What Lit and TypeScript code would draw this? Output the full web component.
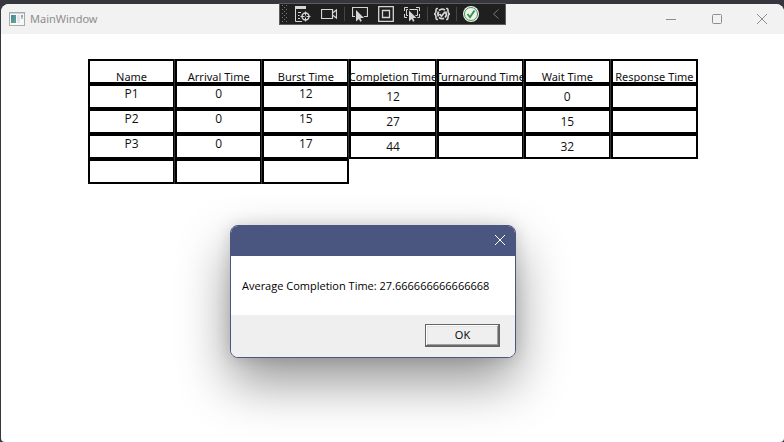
import { LitElement, html, css, svg, nothing } from "lit";
import { customElement, property } from "lit/decorators.js";
import { classMap } from "lit/directives/class-map.js";

type Row = (string | null)[];

const HEADERS = [
  "Name",
  "Arrival Time",
  "Burst Time",
  "Completion Time",
  "Turnaround Time",
  "Wait Time",
  "Response Time",
];

// The first three columns are inputs, the others are computed.
const INPUT_COLUMNS = 3;

const ROWS: Row[] = [
  ["P1", "0", "12", "12", "", "0", ""],
  ["P2", "0", "15", "27", "", "15", ""],
  ["P3", "0", "17", "44", "", "32", ""],
  ["", "", ""],
];

@customElement("debug-toolbar")
class DebugToolbar extends LitElement {
  static styles = css`
    :host {
      display: flex;
      align-items: center;
      box-sizing: border-box;
      height: 22px;
      border: 1px solid #5c5c5c;
      background: #1f1f1f;
    }
    .grip {
      width: 10px;
      height: 20px;
    }
    button {
      display: flex;
      align-items: center;
      justify-content: center;
      width: 26px;
      height: 20px;
      padding: 0;
      border: 0;
      background: none;
    }
    .narrow {
      width: 24px;
    }
    .last {
      width: 22px;
    }
    .sep {
      width: 1px;
      height: 14px;
      margin: 0 2px;
      background: #454545;
    }
    svg {
      display: block;
      fill: none;
      stroke: #d6d6d6;
    }
    .solid {
      fill: #d6d6d6;
      stroke: none;
    }
    .cursor {
      fill: #d6d6d6;
      stroke: #1f1f1f;
      paint-order: stroke;
      stroke-width: 2;
    }
  `;

  private icon(body: unknown) {
    return html`<svg width="16" height="16" viewBox="0 0 16 16" aria-hidden="true">${body}</svg>`;
  }

  render() {
    const dots = [];
    for (let row = 0; row < 9; row++) {
      for (const x of row % 2 ? [4] : [2, 6]) {
        dots.push(svg`<rect x=${x} y=${1 + row * 2} width="1" height="1"/>`);
      }
    }
    return html`
      <svg class="grip" viewBox="0 0 10 20" aria-hidden="true">
        <g fill="#7a7a7a" stroke="none">${dots}</g>
      </svg>
      <button aria-label="Go to live visual tree">
        ${this.icon(svg`
          <path class="solid" d="M0 0h11v3H0z"/>
          <path d="M.5 3v12.500H7M3 6.500h3M3 9.500h1.500M3 12.500h2"/>
          <circle cx="10.500" cy="10.500" r="3.500" stroke-width="1.400"/>
          <path d="M10.500 5.500v4M10.500 11.500v4M5.500 10.500h4M11.500 10.500h4"/>`)}
      </button>
      <button aria-label="Show in XAML live preview">
        ${this.icon(svg`
          <path d="M.5 3.500h11v9H.5z" stroke-width="1.200"/>
          <path d="M11.500 7l4-3v8l-4-3" stroke-width="1.200"/>`)}
      </button>
      <span class="sep"></span>
      <button aria-label="Select element">
        ${this.icon(svg`
          <path d="M3 10.500H.5v-9h15v9H11" stroke-width="1.200"/>
          <path class="cursor" d="M4 4v11.500l3-2.500 1.200 2.800 1.600-.8L8.500 12H12z"/>`)}
      </button>
      <button aria-label="Display layout adorners">
        ${this.icon(svg`
          <path d="M.7.7h14.600v14.600H.7z" stroke-width="1.300"/>
          <path d="M4.500 4.500h7v7h-7z" stroke-width="1.300"/>`)}
      </button>
      <button aria-label="Track focused element">
        ${this.icon(svg`
          <path d="M.5 5V1.500H4M12 1.500h3.500V5M15.500 8v3.500H12M3 11.500H.5V8M4 9.500H2.500v-6h11v6H11"/>
          <path class="cursor" d="M5 4.500v11l2.800-2.500L9 15.800l1.500-.7L9.200 12h3.300z"/>`)}
      </button>
      <span class="sep"></span>
      <button class="narrow" aria-label="Binding failures">
        ${this.icon(svg`
          <path d="M4 2.500H3c-1 0-1 1-1 2.500S1.800 7.500.5 8C1.800 8.500 2 9.500 2 11s0 2.500 1 2.500h1M12 2.500h1c1 0 1 1 1 2.500s.2 2.500 1.500 3C14.200 8.500 14 9.500 14 11s0 2.500-1 2.500h-1" stroke-width="1.600"/>
          <path d="M5 4.500a5 5 0 0 1 6-.5M11.500 5.500c1.200 2 .8 4.500-.5 6M5 11.500a5 5 0 0 0 5 .8M4.500 5.500c-1 2-.8 3.500 0 5" stroke-width="1.800"/>
          <path d="M5.500 8l2 2.200L11 5.800" stroke-width="1.800"/>`)}
      </button>
      <span class="sep"></span>
      <button class="narrow" aria-label="XAML Hot Reload">
        ${this.icon(svg`
          <circle cx="8" cy="8" r="8" fill="#f2f2f2" stroke="none"/>
          <circle cx="8" cy="8" r="6.500" stroke="#3f9e49"/>
          <path d="M4.500 8l2.500 3.300L11.500 4.500" stroke="#2e9439" stroke-width="1.800"/>`)}
      </button>
      <button class="last" aria-label="Collapse toolbar">
        ${this.icon(svg`<path d="M12.500 3.500l-5 4.500 5 4.500" stroke="#7a7a7a"/>`)}
      </button>
    `;
  }
}

@customElement("process-table")
class ProcessTable extends LitElement {
  @property({ attribute: false }) rows: Row[] = [];

  static styles = css`
    :host {
      display: block;
    }
    table {
      width: 610px;
      margin: 0 auto;
      table-layout: fixed;
      border-collapse: separate;
      border-spacing: 0;
      font-size: 12px;
      line-height: 16px;
      color: #111;
    }
    th,
    td {
      box-sizing: border-box;
      height: 25px;
      padding: 0;
      border: 2px solid #000;
      font-weight: 400;
      vertical-align: top;
    }
    th + th,
    td + td {
      box-shadow: -1px 0 #333;
    }
    .cell {
      display: flex;
      justify-content: center;
      box-sizing: border-box;
      height: 21px;
      white-space: nowrap;
    }
    .head {
      padding-top: 8px;
      font-family: "Noto Sans", "Open Sans", sans-serif;
      font-size: 11px;
    }
    .computed {
      padding-top: 3px;
    }
  `;

  render() {
    return html`
      <table>
        <thead>
          <tr>
            ${HEADERS.map((h) => html`<th scope="col"><div class="cell head">${h}</div></th>`)}
          </tr>
        </thead>
        <tbody>
          ${this.rows.map(
            (row) => html`<tr>
              ${row.map(
                (value, i) =>
                  html`<td><div class=${classMap({ cell: true, computed: i >= INPUT_COLUMNS })}>${value || nothing}</div></td>`,
              )}
            </tr>`,
          )}
        </tbody>
      </table>
    `;
  }
}

@customElement("message-box")
class MessageBox extends LitElement {
  @property() message = "";

  static styles = css`
    :host {
      display: block;
      box-sizing: border-box;
      border: 1px solid #4a5580;
      border-radius: 8px;
      background: #fff;
      overflow: hidden;
      box-shadow: 0 24px 52px rgba(0, 0, 0, 0.42), 0 0 16px rgba(0, 0, 0, 0.14);
    }
    header {
      display: flex;
      justify-content: flex-end;
      height: 30px;
      background: #4a5580;
    }
    .close {
      display: flex;
      align-items: center;
      justify-content: center;
      width: 30px;
      height: 28px;
      padding: 0;
      border: 0;
      background: none;
    }
    .message {
      margin: 0;
      padding: 22px 11px 21px;
      font-size: 11px;
      line-height: 16px;
      color: #000;
      white-space: nowrap;
    }
    footer {
      display: flex;
      justify-content: flex-end;
      padding: 9px 15px 10px;
      background: #efefef;
    }
    .ok {
      width: 75px;
      height: 23px;
      padding: 0 0 2px;
      border: 1px solid #646464;
      border-radius: 0;
      background: #efefef;
      box-shadow: inset -1px -1px #696969, inset 1px 1px #fff, inset -2px -2px #a0a0a0, inset 2px 2px #e3e3e3;
      font: inherit;
      font-size: 11px;
      line-height: 16px;
      color: #000;
    }
  `;

  render() {
    return html`
      <header>
        <button class="close" aria-label="Close">
          <svg width="12" height="12" viewBox="0 0 12 12" fill="none" stroke="#fff" aria-hidden="true">
            <path d="M1 1l10 10M11 1L1 11" />
          </svg>
        </button>
      </header>
      <p class="message">${this.message}</p>
      <footer><button class="ok">OK</button></footer>
    `;
  }
}

@customElement("app-root")
class AppRoot extends LitElement {
  static styles = css`
    :host {
      display: flex;
      flex-direction: column;
      box-sizing: border-box;
      position: relative;
      min-height: 100vh;
      padding: 4px 0 0 1px;
      background: #35363e;
      font-family: "Open Sans", "Noto Sans", sans-serif;
    }
    .window {
      flex: 1;
      display: flex;
      flex-direction: column;
      border-radius: 8px 8px 4px 4px;
      background: #fff;
      overflow: hidden;
    }
    .titlebar {
      display: flex;
      align-items: center;
      height: 30px;
      padding-left: 8px;
      background: #f2f2f2;
      color: #8e8e8e;
    }
    h1 {
      flex: 1;
      margin: 0 0 0 5px;
      font-family: "Noto Sans", "Open Sans", sans-serif;
      font-size: 11px;
      font-weight: 400;
      line-height: 16px;
    }
    .controls {
      display: flex;
    }
    .controls button {
      display: flex;
      align-items: center;
      justify-content: center;
      width: 46px;
      height: 28px;
      padding: 0;
      border: 0;
      background: none;
    }
    .controls button:last-child {
      width: 44px;
    }
    .controls svg {
      fill: none;
      stroke: #8e8e8e;
    }
    main {
      padding: 25px 0 25px 1px;
    }
    debug-toolbar {
      position: absolute;
      top: 3px;
      left: 50%;
      transform: translateX(-113px);
    }
    message-box {
      position: absolute;
      top: 225px;
      left: 230px;
      width: 286px;
    }
  `;

  render() {
    return html`
      <div class="window">
        <div class="titlebar">
          <svg width="16" height="14" viewBox="0 0 16 14" aria-hidden="true">
            <defs>
              <linearGradient id="pane" x1="0" y1="0" x2="1" y2="1">
                <stop offset="0" stop-color="#4a7fae" />
                <stop offset="1" stop-color="#5fae82" />
              </linearGradient>
            </defs>
            <rect x=".5" y=".5" width="15" height="13" fill="#f8f8f8" stroke="#a9a9a9" />
            <rect x="1" y="1" width="14" height="1" fill="#cfd3d6" />
            <rect x="2" y="3" width="5" height="8" fill="url(#pane)" />
            <rect x="8" y="3" width="3" height="8" fill="#e3e5e7" />
            <rect x="12" y="3" width="2" height="2" fill="#82a9c4" />
            <rect x="12" y="5" width="2" height="2" fill="#a6cfb4" />
          </svg>
          <h1>MainWindow</h1>
          <div class="controls">
            <button aria-label="Minimize">
              <svg width="10" height="10" viewBox="0 0 10 10"><path d="M0 5.500h10" /></svg>
            </button>
            <button aria-label="Maximize">
              <svg width="10" height="10" viewBox="0 0 10 10"><rect x=".5" y=".5" width="9" height="9" rx="1" /></svg>
            </button>
            <button aria-label="Close">
              <svg width="10" height="10" viewBox="0 0 10 10"><path d="M0 0l10 10M10 0L0 10" /></svg>
            </button>
          </div>
        </div>
        <main><process-table .rows=${ROWS}></process-table></main>
      </div>
      <debug-toolbar role="toolbar" aria-label="Debug tools"></debug-toolbar>
      <message-box role="dialog" aria-label="Average Completion Time" .message=${"Average Completion Time: 27.666666666666668"}></message-box>
    `;
  }
}
